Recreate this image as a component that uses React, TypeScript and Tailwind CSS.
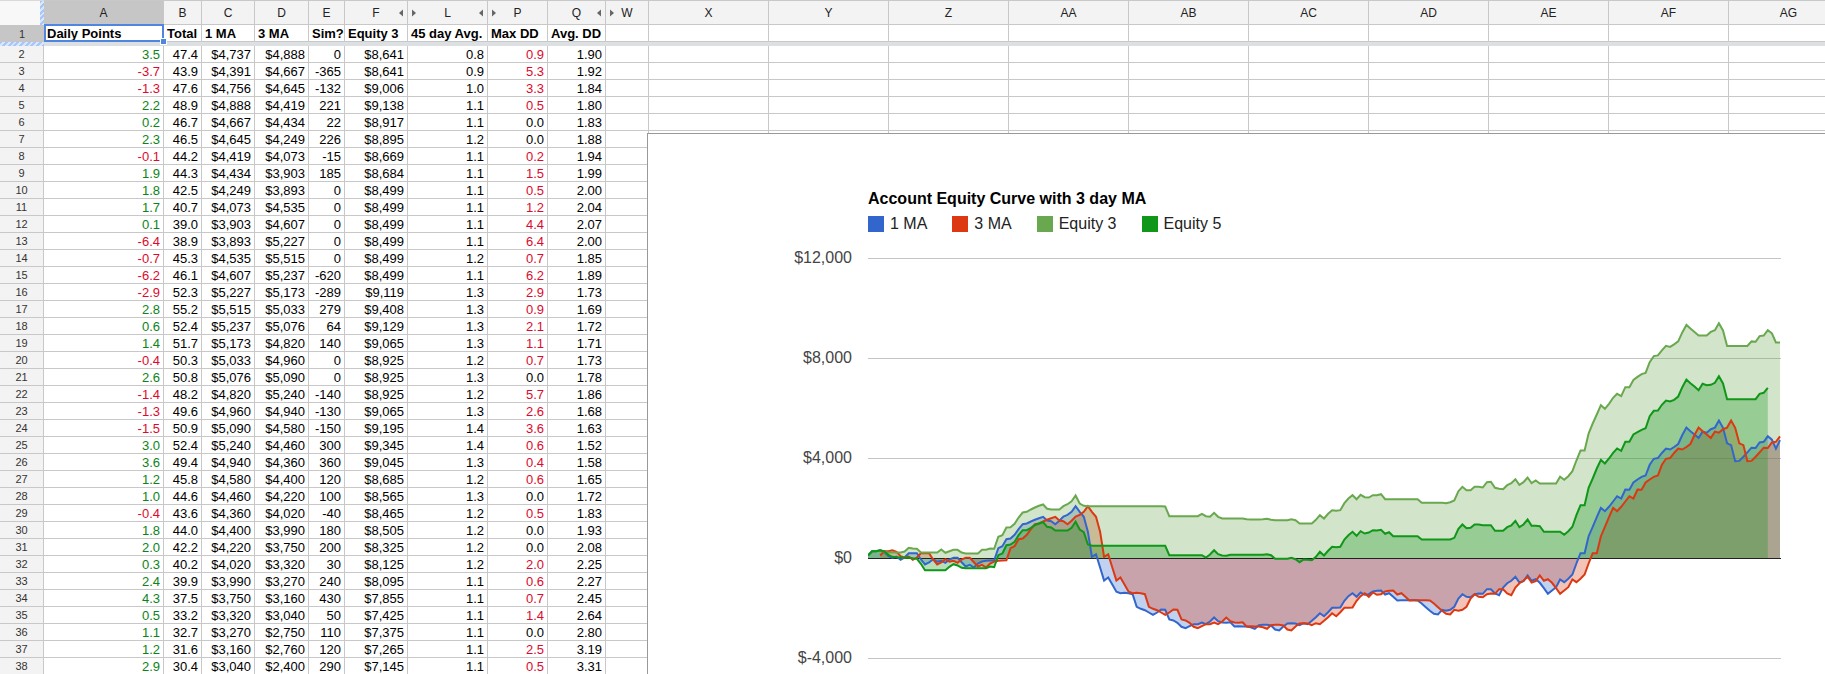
import React from 'react';
import clsx from 'clsx';

type Column = { id: string; width: string; hiddenLeft?: boolean; hiddenRight?: boolean };

const columns: Column[] = [
  { id: 'A', width: 'w-[120px]' },
  { id: 'B', width: 'w-[38px]' },
  { id: 'C', width: 'w-[53px]' },
  { id: 'D', width: 'w-[54px]' },
  { id: 'E', width: 'w-[36px]' },
  { id: 'F', width: 'w-[63px]', hiddenRight: true },
  { id: 'L', width: 'w-[80px]', hiddenLeft: true, hiddenRight: true },
  { id: 'P', width: 'w-[60px]', hiddenLeft: true },
  { id: 'Q', width: 'w-[58px]', hiddenRight: true },
  { id: 'W', width: 'w-[43px]', hiddenLeft: true },
  { id: 'X', width: 'w-[120px]' },
  { id: 'Y', width: 'w-[120px]' },
  { id: 'Z', width: 'w-[120px]' },
  { id: 'AA', width: 'w-[120px]' },
  { id: 'AB', width: 'w-[120px]' },
  { id: 'AC', width: 'w-[120px]' },
  { id: 'AD', width: 'w-[120px]' },
  { id: 'AE', width: 'w-[120px]' },
  { id: 'AF', width: 'w-[120px]' },
  { id: 'AG', width: 'w-[120px]' },
];

const titles = ['Daily Points', 'Total', '1 MA', '3 MA', 'Sim?', 'Equity 3', '45 day Avg.', 'Max DD', 'Avg. DD'];

// daily points, total, 1 MA, 3 MA, sim, equity 3, 45 day avg, max dd, avg dd (newest first)
const rows = [
  ['3.5', '47.4', '$4,737', '$4,888', '0', '$8,641', '0.8', '0.9', '1.90'],
  ['-3.7', '43.9', '$4,391', '$4,667', '-365', '$8,641', '0.9', '5.3', '1.92'],
  ['-1.3', '47.6', '$4,756', '$4,645', '-132', '$9,006', '1.0', '3.3', '1.84'],
  ['2.2', '48.9', '$4,888', '$4,419', '221', '$9,138', '1.1', '0.5', '1.80'],
  ['0.2', '46.7', '$4,667', '$4,434', '22', '$8,917', '1.1', '0.0', '1.83'],
  ['2.3', '46.5', '$4,645', '$4,249', '226', '$8,895', '1.2', '0.0', '1.88'],
  ['-0.1', '44.2', '$4,419', '$4,073', '-15', '$8,669', '1.1', '0.2', '1.94'],
  ['1.9', '44.3', '$4,434', '$3,903', '185', '$8,684', '1.1', '1.5', '1.99'],
  ['1.8', '42.5', '$4,249', '$3,893', '0', '$8,499', '1.1', '0.5', '2.00'],
  ['1.7', '40.7', '$4,073', '$4,535', '0', '$8,499', '1.1', '1.2', '2.04'],
  ['0.1', '39.0', '$3,903', '$4,607', '0', '$8,499', '1.1', '4.4', '2.07'],
  ['-6.4', '38.9', '$3,893', '$5,227', '0', '$8,499', '1.1', '6.4', '2.00'],
  ['-0.7', '45.3', '$4,535', '$5,515', '0', '$8,499', '1.2', '0.7', '1.85'],
  ['-6.2', '46.1', '$4,607', '$5,237', '-620', '$8,499', '1.1', '6.2', '1.89'],
  ['-2.9', '52.3', '$5,227', '$5,173', '-289', '$9,119', '1.3', '2.9', '1.73'],
  ['2.8', '55.2', '$5,515', '$5,033', '279', '$9,408', '1.3', '0.9', '1.69'],
  ['0.6', '52.4', '$5,237', '$5,076', '64', '$9,129', '1.3', '2.1', '1.72'],
  ['1.4', '51.7', '$5,173', '$4,820', '140', '$9,065', '1.3', '1.1', '1.71'],
  ['-0.4', '50.3', '$5,033', '$4,960', '0', '$8,925', '1.2', '0.7', '1.73'],
  ['2.6', '50.8', '$5,076', '$5,090', '0', '$8,925', '1.3', '0.0', '1.78'],
  ['-1.4', '48.2', '$4,820', '$5,240', '-140', '$8,925', '1.2', '5.7', '1.86'],
  ['-1.3', '49.6', '$4,960', '$4,940', '-130', '$9,065', '1.3', '2.6', '1.68'],
  ['-1.5', '50.9', '$5,090', '$4,580', '-150', '$9,195', '1.4', '3.6', '1.63'],
  ['3.0', '52.4', '$5,240', '$4,460', '300', '$9,345', '1.4', '0.6', '1.52'],
  ['3.6', '49.4', '$4,940', '$4,360', '360', '$9,045', '1.3', '0.4', '1.58'],
  ['1.2', '45.8', '$4,580', '$4,400', '120', '$8,685', '1.2', '0.6', '1.65'],
  ['1.0', '44.6', '$4,460', '$4,220', '100', '$8,565', '1.3', '0.0', '1.72'],
  ['-0.4', '43.6', '$4,360', '$4,020', '-40', '$8,465', '1.2', '0.5', '1.83'],
  ['1.8', '44.0', '$4,400', '$3,990', '180', '$8,505', '1.2', '0.0', '1.93'],
  ['2.0', '42.2', '$4,220', '$3,750', '200', '$8,325', '1.2', '0.0', '2.08'],
  ['0.3', '40.2', '$4,020', '$3,320', '30', '$8,125', '1.2', '2.0', '2.25'],
  ['2.4', '39.9', '$3,990', '$3,270', '240', '$8,095', '1.1', '0.6', '2.27'],
  ['4.3', '37.5', '$3,750', '$3,160', '430', '$7,855', '1.1', '0.7', '2.45'],
  ['0.5', '33.2', '$3,320', '$3,040', '50', '$7,425', '1.1', '1.4', '2.64'],
  ['1.1', '32.7', '$3,270', '$2,750', '110', '$7,375', '1.1', '0.0', '2.80'],
  ['1.2', '31.6', '$3,160', '$2,760', '120', '$7,265', '1.1', '2.5', '3.19'],
  ['2.9', '30.4', '$3,040', '$2,400', '290', '$7,145', '1.1', '0.5', '3.31'],
];

// Older history, oldest first, in ticks: 300 ticks make one $4,000 grid step
const TICK = 4000 / 300;

const maHistory = [
  9, 22, 22, 25, 20, 7, 2, 6, -4, 3, 16, 16, 16, -3, -18, -12, -2, -10, -7, -13, -3, 2, 2, -11, -24, -19, -27, -15,
  -9, -7, -6, -5, 31, 37, 58, 60, 71, 88, 103, 105, 111, 116, 121, 125, 114, 112, 103, 113, 126, 131, 140, 157, 140,
  125, 80, 5, 13, -27, -66, -57, -78, -100, -104, -103, -104, -107, -145, -151, -155, -162, -169, -162, -153, -154,
  -183, -186, -193, -205, -209, -203, -197, -197, -192, -197, -189, -177, -188, -192, -193, -191, -204, -203, -204,
  -204, -206, -211, -200, -199, -199, -201, -213, -216, -204, -195, -194, -195, -200, -194, -197, -187, -176, -164,
  -173, -161, -148, -148, -147, -127, -113, -104, -115, -102, -109, -107, -99, -97, -96, -108, -104, -115, -126,
  -125, -125, -125, -125, -126, -135, -146, -157, -166, -168, -154, -157, -154, -145, -120, -107, -115, -116, -107,
  -105, -106, -92, -92, -105, -110, -87, -74, -67, -55, -72, -68, -51, -67, -62, -73, -89, -106, -96, -86, -63, -71,
  -61, -48, -15, 16, 16, 67, 95, 124, 152, 142, 155, 171, 187, 180, 207, 206,
];

const equity3History = [
  9, 22, 22, 25, 20, 18, 18, 18, 18, 21, 32, 30, 29, 18, 18, 18, 18, 18, 27, 17, 22, 26, 26, 18, 15, 15, 15, 15, 26,
  26, 30, 29, 65, 70, 93, 94, 104, 123, 138, 140, 147, 153, 158, 162, 149, 147, 147, 147, 157, 163, 172, 189, 165,
  158, 157, 157, 157, 157, 157, 157, 157, 157, 157, 157, 157, 157, 157, 157, 157, 157, 157, 157, 157, 156, 127, 127,
  127, 127, 127, 127, 127, 127, 134, 127, 125, 137, 125, 120, 120, 120, 120, 120, 120, 118, 117, 117, 117, 118, 119,
  116, 115, 115, 115, 115, 118, 115, 105, 105, 105, 105, 116, 130, 120, 134, 145, 143, 145, 166, 180, 190, 178, 191,
  184, 183, 190, 190, 193, 178, 178, 178, 178, 178, 178, 178, 178, 178, 167, 167, 167, 167, 167, 167, 166, 169, 174,
  202, 215, 205, 205, 215, 215, 213, 229, 230, 212, 209, 208, 220, 226, 238, 221, 229, 243, 226, 234, 225, 225, 225,
  225, 225, 245, 236, 247, 262, 294, 324, 324, 375, 405, 432, 460, 449, 464, 482, 494, 487, 514, 514,
];

const equity5History = [
  9, 22, 22, 25, 21, 11, 5, 4, 3, 2, 3, 1, -1, -16, -35, -35, -35, -35, -35, -35, -25, -17, -21, -28, -29, -29, -29,
  -29, -29, -29, -24, -26, 10, 15, 40, 42, 50, 70, 85, 85, 92, 100, 105, 109, 95, 93, 84, 84, 84, 84, 92, 110, 87, 79,
  42, 38, 38, 38, 38, 38, 38, 38, 38, 38, 38, 38, 38, 38, 38, 38, 38, 38, 38, 38, 10, 10, 10, 10, 10, 10, 10, 10, 10,
  3, 12, 25, 13, 9, 8, 11, 11, 11, 11, 11, 11, 11, 11, 11, 13, 10, -1, -1, -1, -1, 2, -2, -11, -3, -4, -5, 5, 20, 9,
  23, 35, 34, 35, 57, 70, 80, 68, 82, 75, 78, 85, 84, 86, 74, 79, 67, 67, 67, 67, 67, 67, 67, 57, 57, 57, 57, 57, 57,
  57, 57, 62, 89, 102, 91, 92, 102, 102, 100, 100, 100, 83, 83, 83, 94, 99, 113, 94, 102, 117, 98, 98, 97, 80, 80,
  80, 80, 80, 71, 82, 95, 130, 160, 160, 212, 240, 270, 296, 285, 300, 317, 330, 323, 350, 350, 372, 379, 386, 391,
  427, 443, 444, 461, 474, 471, 476, 486, 514, 537, 526, 516, 505, 524, 520, 521, 527, 547, 525, 478, 478, 478, 478,
  478, 478, 478, 478, 494, 497, 512,
];

const dollars = (text: string) => Number(text.replace(/[$,]/g, ''));
const fromSheet = (index: number) => rows.map((row) => dollars(row[index])).reverse();
const fromTicks = (ticks: number[]) => ticks.map((tick) => tick * TICK);

const oneDay = [...fromTicks(maHistory), ...fromSheet(2)];

const PLOT_WIDTH = 912;
const LAST = oneDay.length - 1;
const yOf = (value: number) => 310.5 - value / 40;
const xOf = (index: number) => (index * PLOT_WIDTH) / LAST;

// The 3 day line is the 1 day line lagging by three sessions
const series = [
  { name: '1 MA', color: '#3366cc', swatch: 'bg-[#3366cc]', start: 0, values: oneDay },
  { name: '3 MA', color: '#dc3912', swatch: 'bg-[#dc3912]', start: 3, values: oneDay.slice(0, -3) },
  {
    name: 'Equity 3',
    color: '#6aa84f',
    swatch: 'bg-[#6aa84f]',
    start: 0,
    values: [...fromTicks(equity3History), ...fromSheet(5)],
  },
  { name: 'Equity 5', color: '#109618', swatch: 'bg-[#109618]', start: 0, values: fromTicks(equity5History) },
];

const linePath = (start: number, values: number[]) =>
  values.map((v, i) => `${i === 0 ? 'M' : 'L'}${xOf(start + i).toFixed(1)} ${yOf(v).toFixed(1)}`).join('');

const areaPath = (start: number, values: number[]) =>
  `${linePath(start, values)}V${yOf(0)}H${xOf(start).toFixed(1)}Z`;

const axisLabels = ['$12,000', '$8,000', '$4,000', '$0', '$-4,000'];

const HATCH = 'bg-[repeating-linear-gradient(135deg,#a9c6f8_0px,#a9c6f8_2px,#d9e6fc_2px,#d9e6fc_4px)]';

const HiddenArrow: React.FC<{ side: 'left' | 'right' }> = ({ side }) => (
  <svg width="4" height="8" viewBox="0 0 4 8" className="shrink-0" aria-hidden="true">
    <path d={side === 'left' ? 'M0 0.5L4 4L0 7.5Z' : 'M4 0.5L0 4L4 7.5Z'} fill="#666" />
  </svg>
);

const cellColor = (column: number, text: string) => {
  if (column === 0) return text.startsWith('-') ? 'text-[#dc0a2d]' : 'text-[#0b8418]';
  if (column === 7 && text !== '0.0') return 'text-[#dc0a2d]';
  return 'text-black';
};

const Sheet: React.FC = () => (
  <table className="w-0 table-fixed border-separate border-spacing-0 text-[13px] leading-[14px] text-black">
    <colgroup>
      <col className="w-[44px]" />
      {columns.map((column) => (
        <col key={column.id} className={column.width} />
      ))}
    </colgroup>
    <thead>
      <tr>
        <td className="h-[25px] border-t border-[#d9d9d9] bg-[#f8f8f8] p-0">
          <div className={clsx('ml-auto h-6 w-1', HATCH)} />
        </td>
        {columns.map((column) => (
          <th
            key={column.id}
            scope="col"
            className={clsx(
              'h-[25px] border-t border-r border-b border-[#c8c8c8] p-0 text-xs font-normal text-[#222]',
              column.id === 'A' ? 'bg-[#c6c6c6]' : 'bg-[#f3f3f3]',
            )}
          >
            <div className="flex items-center px-1">
              <span className="flex w-1">{column.hiddenLeft && <HiddenArrow side="left" />}</span>
              <span className="flex-1 text-center">{column.id}</span>
              <span className="flex w-1">{column.hiddenRight && <HiddenArrow side="right" />}</span>
            </div>
          </th>
        ))}
      </tr>
      <tr>
        <th scope="row" className="h-[17px] bg-[#c6c6c6] p-0 text-[11px] font-normal text-[#333]">
          1
        </th>
        {columns.map((column, i) => (
          <td
            key={column.id}
            className={clsx(
              'h-[17px] border-r border-b border-[#c8c8c8] px-[3px] pt-[2px] pb-0 font-bold whitespace-nowrap',
              i === 0 && 'relative z-10',
            )}
          >
            {titles[i]}
            {i === 0 && (
              <>
                <div className="absolute -top-px -right-px -bottom-px left-0 border-2 border-[#4f86e0]" />
                <div className="absolute -right-[4px] -bottom-[4px] size-[7px] border border-white bg-[#4f86e0]" />
              </>
            )}
          </td>
        ))}
      </tr>
      {/* Frozen row divider */}
      <tr>
        <td className={clsx('h-1 p-0', HATCH)} />
        <td colSpan={columns.length} className="h-1 bg-[#dce0e3] p-0" />
      </tr>
    </thead>
    <tbody>
      {rows.map((row, r) => (
        <tr key={r}>
          <th
            scope="row"
            className="h-[17px] border-r border-b border-[#c8c8c8] bg-[#f3f3f3] p-0 text-[11px] font-normal text-[#333]"
          >
            {r + 2}
          </th>
          {columns.map((column, i) => (
            <td
              key={column.id}
              className={clsx(
                'h-[17px] border-r border-b border-[#c8c8c8] px-[3px] pt-[2px] pb-0 text-right whitespace-nowrap',
                row[i] && cellColor(i, row[i]),
              )}
            >
              {row[i]}
            </td>
          ))}
        </tr>
      ))}
    </tbody>
  </table>
);

const EquityChart: React.FC = () => (
  <section className="absolute top-[133px] right-0 bottom-0 left-[647px] overflow-hidden border-t border-l border-[#999] bg-white text-base">
    <div className="pt-[53px] pl-[220px]">
      <h2 className="leading-6 font-bold text-black">Account Equity Curve with 3 day MA</h2>
      <ul className="mt-px flex gap-[25px] leading-6 text-[#222]">
        {series.map((s) => (
          <li key={s.name} className="flex items-center gap-[6px]">
            <span className={clsx('size-4', s.swatch)} />
            {s.name}
          </li>
        ))}
      </ul>
    </div>
    <div className="mt-3 flex gap-4">
      <div className="flex h-[420px] w-[204px] flex-col justify-between text-right leading-5 text-[#444]">
        {axisLabels.map((label) => (
          <span key={label}>{label}</span>
        ))}
      </div>
      <svg width="914" height="420" viewBox="0 0 914 420" className="shrink-0" role="img" aria-label="Equity curve">
        {axisLabels.map((label, i) => (
          <line key={label} x1="0" x2="913" y1={10.5 + i * 100} y2={10.5 + i * 100} stroke="#c4c4c4" />
        ))}
        {series.map((s) => (
          <path key={s.name} d={areaPath(s.start, s.values)} fill={s.color} fillOpacity="0.3" />
        ))}
        <line x1="0" x2="913" y1={yOf(0)} y2={yOf(0)} stroke="#222" />
        {series.map((s) => (
          <path key={s.name} d={linePath(s.start, s.values)} fill="none" stroke={s.color} strokeWidth="2" />
        ))}
      </svg>
    </div>
  </section>
);

const App: React.FC = () => {
  return (
    <main className="relative h-screen overflow-hidden bg-white font-['Liberation_Sans',Arial,sans-serif]">
      <Sheet />
      <EquityChart />
    </main>
  );
};

export default App;
